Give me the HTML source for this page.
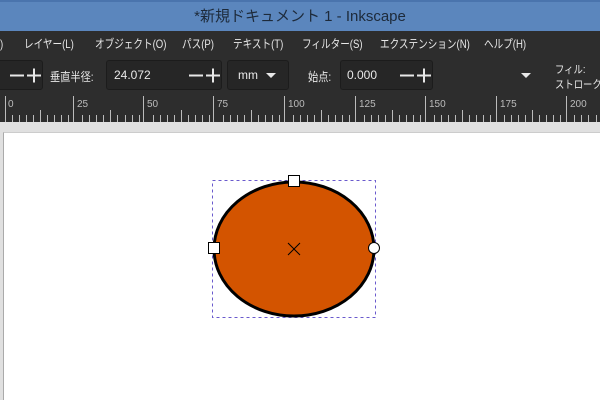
<!DOCTYPE html>
<html><head><meta charset="utf-8"><style>
*{margin:0;padding:0;box-sizing:border-box}
body{width:600px;height:400px;overflow:hidden;background:#e0e0e0;font-family:"Liberation Sans","Noto Sans CJK JP",sans-serif;position:relative}
.title{position:absolute;left:0;top:0;width:600px;height:31px;background:#5b86bd;border-top:2px solid #4a74ad;color:#1d2a3a;font-size:15px;text-align:center;line-height:29px}
.menu{position:absolute;left:0;top:31px;width:600px;height:26px;background:#2d2d2d;color:#e8e8e8;font-size:12px;line-height:26px;white-space:nowrap}
.menu span{position:absolute;transform:scaleX(0.8);transform-origin:left}
.tb{position:absolute;left:0;top:57px;width:600px;height:37px;background:#2d2d2d;color:#e8e8e8;font-size:12px}
.box{position:absolute;top:3px;height:30px;border:1px solid #1c1c1c;background:#262626;border-radius:3px}
.t{position:absolute;white-space:nowrap}
.s{transform:scaleX(0.85);transform-origin:left}
.ruler{position:absolute;left:0;top:94px;width:600px;height:28px;background:#2d2d2d}
.canvas{position:absolute;left:3px;top:132px;width:597px;height:268px;background:#fff;border-left:1px solid #aaa;border-top:1px solid #ccc}
</style></head><body>
<div class="title">*新規ドキュメント 1 - Inkscape</div>
<div class="menu">
<span style="left:0">)</span><span style="left:24px">レイヤー(L)</span><span style="left:95px">オブジェクト(O)</span><span style="left:182px">パス(P)</span><span style="left:233px">テキスト(T)</span><span style="left:302px">フィルター(S)</span><span style="left:380px">エクステンション(N)</span><span style="left:484px">ヘルプ(H)</span>
</div>
<div class="tb">
<div class="box" style="left:-5px;width:48px"></div>
<span class="t s" style="left:50px;top:11px">垂直半径:</span>
<div class="box" style="left:106px;width:116px"></div>
<span class="t" style="left:114px;top:11px">24.072</span>
<div class="box" style="left:227px;width:62px"></div>
<span class="t" style="left:238px;top:11px">mm</span>
<span class="t s" style="left:308px;top:11px">始点:</span>
<div class="box" style="left:340px;width:93px"></div>
<span class="t" style="left:347px;top:11px">0.000</span>
<span class="t s" style="left:555px;top:4px;font-size:11px">フィル:</span>
<span class="t s" style="left:555px;top:19px;font-size:11px">ストローク:</span>
<svg width="600" height="37" style="position:absolute;left:0;top:0" stroke="#e8e8e8" stroke-width="2">
<path d="M10 18.5H24M27 18.5H41M34 11.5V25.5"/>
<path d="M189 18.5H203M206 18.5H220M213 11.5V25.5"/>
<path d="M400 18.5H414M417 18.5H431M424 11.5V25.5"/>
<path d="M266 16H276L271 21Z M521 16H531L526 21Z" fill="#e8e8e8" stroke="none"/>
</svg>
</div>
<div class="ruler">
<svg width="600" height="28" style="position:absolute;left:0;top:0">
<g stroke="#bbb" stroke-width="1">
<line x1="5.5" y1="2" x2="5.5" y2="28"/><line x1="73.5" y1="2" x2="73.5" y2="28"/><line x1="143.5" y1="2" x2="143.5" y2="28"/><line x1="213.5" y1="2" x2="213.5" y2="28"/><line x1="284.5" y1="2" x2="284.5" y2="28"/><line x1="355.5" y1="2" x2="355.5" y2="28"/><line x1="425.5" y1="2" x2="425.5" y2="28"/><line x1="496.5" y1="2" x2="496.5" y2="28"/><line x1="566.5" y1="2" x2="566.5" y2="28"/>
</g>
<g fill="#bbb" font-size="10" font-family="Liberation Sans">
<text x="8" y="13">0</text><text x="77" y="13">25</text><text x="147" y="13">50</text><text x="217" y="13">75</text><text x="288" y="13">100</text><text x="359" y="13">125</text><text x="429" y="13">150</text><text x="500" y="13">175</text><text x="570" y="13">200</text>
</g>
<g stroke="#bbb" id="tk"></g>
</svg>
</div>
<div class="canvas"></div>
<svg width="600" height="400" style="position:absolute;left:0;top:0">
<rect x="212.5" y="180.5" width="163" height="137" fill="none" stroke="#6a5acd" stroke-width="1" stroke-dasharray="3,3"/>
<ellipse cx="294" cy="249" rx="80" ry="67" fill="#d35400" stroke="#000" stroke-width="3"/>
<path d="M288 243L300 255M300 243L288 255" stroke="#000" stroke-width="1"/>
<rect x="288.5" y="175.5" width="11" height="11" fill="#fff" stroke="#000"/>
<rect x="208.5" y="242.5" width="11" height="11" fill="#fff" stroke="#000"/>
<circle cx="374" cy="248" r="5.5" fill="#fff" stroke="#000"/>
</svg>
<script>
var g=document.getElementById('tk'),s='';
for(var i=0;i<90;i++){var x=5+i*7.03;if(i%10==0)continue;var h=(i%5==0)?12:7;s+='<line x1="'+(Math.round(x)+.5)+'" y1="'+(28-h)+'" x2="'+(Math.round(x)+.5)+'" y2="28"/>';}
g.innerHTML=s;
</script>
</body></html>
